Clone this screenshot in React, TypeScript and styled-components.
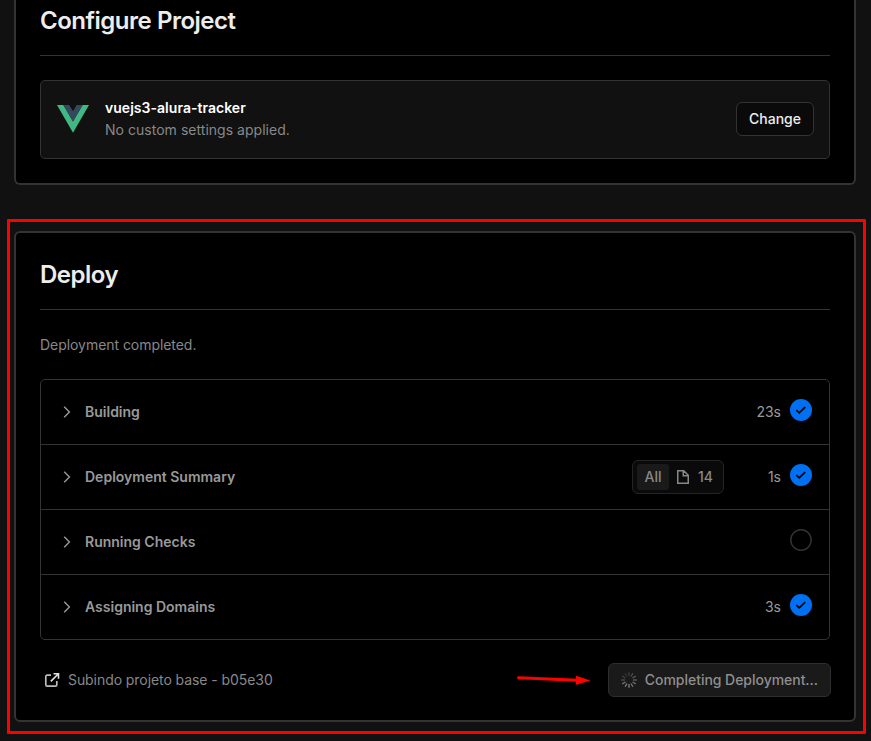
import React from "react";
import styled, { createGlobalStyle } from "styled-components";

const GlobalStyle = createGlobalStyle`
  *, *::before, *::after { box-sizing: border-box; }
  html, body { margin: 0; background: #111; }
  body {
    height: 741px;
    overflow: hidden;
    font-family: Inter, "Liberation Sans", sans-serif;
    font-size: 14px;
    line-height: 20px;
    color: #888;
  }
  svg { display: block; flex: none; }
`;

const Page = styled.main`
  position: relative;
  width: 871px;
  height: 741px;
  padding: 0 15px 0 14px;
  overflow: hidden;
  background: #111;
`;

const Card = styled.section<{ $height: number; $cut?: boolean }>`
  height: ${(p) => p.$height}px;
  padding: ${(p) => (p.$cut ? "0" : "24px")} 24px 0;
  background: #000;
  border: 2px solid #333;
  ${(p) => (p.$cut ? "border-top: 0; border-radius: 0 0 6px 6px; margin-bottom: 46px;" : "border-radius: 6px;")}
`;

const Title = styled.h2<{ $height: number; $top: number }>`
  height: ${(p) => p.$height}px;
  margin: 0;
  padding-top: ${(p) => p.$top}px;
  border-bottom: 1px solid #333;
  color: #ededed;
  font-size: 24px;
  line-height: 32px;
  font-weight: 600;
  letter-spacing: -0.48px;
`;

const ProjectBox = styled.div`
  display: flex;
  align-items: center;
  height: 79px;
  margin-top: 24px;
  padding: 0 15px 2px 16px;
  background: #111;
  border: 1px solid #333;
  border-radius: 5px;
`;

const ProjectText = styled.div`
  flex: 1;
  margin-left: 16px;
  line-height: 22px;
  letter-spacing: 0.03px;
`;

const ProjectName = styled.div`
  color: #fff;
  font-weight: 600;
`;

const Button = styled.button<{ $disabled?: boolean }>`
  display: flex;
  align-items: center;
  height: 34px;
  padding: 0 12px;
  font: 500 14px/20px Inter, "Liberation Sans", sans-serif;
  letter-spacing: ${(p) => (p.$disabled ? "-0.035px" : "0")};
  border-radius: 6px;
  border: 1px solid ${(p) => (p.$disabled ? "#2e2e2e" : "#333")};
  background: ${(p) => (p.$disabled ? "#1a1a1a" : "#0a0a0a")};
  color: ${(p) => (p.$disabled ? "#8f8f8f" : "#ededed")};
  svg { margin-right: 8px; }
`;

const Status = styled.p`
  margin: 25px 0 24px;
  letter-spacing: -0.05px;
`;

const Steps = styled.div`
  border: 1px solid #333;
  border-radius: 5px;
`;

const Step = styled.div`
  display: flex;
  align-items: center;
  height: 65px;
  padding: 0 17px 0 18px;
  & + & { border-top: 1px solid #333; }
  &:first-child { height: 64px; }
`;

const StepName = styled.span`
  flex: 1;
  margin-left: 10px;
  color: #999;
  font-weight: 600;
`;

const Duration = styled.span`
  width: 57px;
  text-align: right;
  color: #999;
`;

const StateIcon = styled.span`
  margin: 0 0 4px 9px;
`;

const Filter = styled.div`
  display: flex;
  align-items: center;
  width: 92px;
  height: 34px;
  padding: 0 4px;
  background: #0a0a0a;
  border: 1px solid #242424;
  border-radius: 6px;
  font-weight: 500;
`;

const FilterAll = styled.span`
  width: 32px;
  height: 26px;
  line-height: 26px;
  margin-right: 6px;
  text-align: center;
  background: #1a1a1a;
  border-radius: 3px;
`;

const FilterCount = styled.span`
  margin-left: 7px;
`;

const Footer = styled.footer`
  display: flex;
  align-items: center;
  justify-content: space-between;
  margin: 23px -1px 0 4px;
`;

const Commit = styled.span`
  display: flex;
  align-items: center;
  gap: 8px;
  letter-spacing: -0.07px;
`;

const Highlight = styled.div`
  position: absolute;
  left: 7px;
  top: 219px;
  width: 859px;
  height: 515px;
  border: 3px solid #f00;
  border-radius: 1px;
`;

const Arrow = styled.svg`
  position: absolute;
  left: 516px;
  top: 672px;
`;

const VueLogo = () => (
  <svg width="32" height="28" viewBox="0 0 32 28">
    <path fill="#41b883" d="M0 0h6.4L16 16.4 25.6 0H32L16 27.7z" />
    <path fill="#35495e" d="M6.4 0h5.9L16 6.3 19.7 0h5.9L16 16.5z" />
  </svg>
);

const Chevron = () => (
  <svg width="16" height="16" viewBox="0 0 16 16" fill="none" stroke="#999" strokeWidth="1.4">
    <path d="M5.2 2.8 10.4 8l-5.2 5.2" />
  </svg>
);

const Done = () => (
  <svg width="22" height="22" viewBox="0 0 22 22" fill="none">
    <circle cx="11" cy="11" r="11" fill="#0070f3" />
    <path d="m6.4 11.1 2.8 2.8 6-5.8" stroke="#000" strokeWidth="1.7" />
  </svg>
);

const Pending = () => (
  <svg width="22" height="22" viewBox="0 0 22 22" fill="none">
    <circle cx="11" cy="11" r="10.2" stroke="#333" strokeWidth="1.4" />
  </svg>
);

const FileIcon = () => (
  <svg width="16" height="16" viewBox="0 0 16 16" fill="none" stroke="#888" strokeWidth="1.5">
    <path d="M2.75 1.75h6l4.5 4.5v8H2.75zM8.25 1.75v5h5" />
  </svg>
);

const ExternalIcon = () => (
  <svg width="16" height="16" viewBox="0 0 16 16" fill="none">
    <path d="M7 3.2H3.2a1.4 1.4 0 0 0-1.4 1.4v8.2a1.4 1.4 0 0 0 1.4 1.4h8.2a1.4 1.4 0 0 0 1.4-1.4V9" stroke="#bbb" strokeWidth="1.7" />
    <path d="M9.5 1.7h5v5M14.2 2 6.8 9.4" stroke="#e2e2e2" strokeWidth="1.6" />
  </svg>
);

const Spinner = () => (
  <svg width="16" height="16" viewBox="0 0 16 16" stroke="#a0a0a0" strokeWidth="1.25">
    {Array.from({ length: 12 }, (_, i) => (
      <path
        key={i}
        d="M8 .2v3.8"
        transform={`rotate(${i * 30} 8 8)`}
        opacity={[0.28, 0.4, 0.47, 0.54, 0.62, 0.7, 0.8, 0.8, 0.7, 0.42, 0.28, 0.2][i]}
      />
    ))}
  </svg>
);

const steps = [
  { name: "Building", time: "23s", done: true },
  { name: "Deployment Summary", time: "1s", done: true, files: 14 },
  { name: "Running Checks", time: "", done: false },
  { name: "Assigning Domains", time: "3s", done: true },
];

export default function App() {
  return (
    <>
      <GlobalStyle />
      <Page>
        <Card $height={185} $cut>
          <Title $height={56} $top={5}>Configure Project</Title>
          <ProjectBox>
            <VueLogo />
            <ProjectText>
              <ProjectName>vuejs3-alura-tracker</ProjectName>
              <div>No custom settings applied.</div>
            </ProjectText>
            <Button>Change</Button>
          </ProjectBox>
        </Card>
        <Card $height={491}>
          <Title $height={53} $top={2}>Deploy</Title>
          <Status>Deployment completed.</Status>
          <Steps>
            {steps.map((s) => (
              <Step key={s.name}>
                <Chevron />
                <StepName>{s.name}</StepName>
                {s.files && (
                  <Filter>
                    <FilterAll>All</FilterAll>
                    <FileIcon />
                    <FilterCount>{s.files}</FilterCount>
                  </Filter>
                )}
                <Duration>{s.time}</Duration>
                <StateIcon>{s.done ? <Done /> : <Pending />}</StateIcon>
              </Step>
            ))}
          </Steps>
          <Footer>
            <Commit>
              <ExternalIcon />
              Subindo projeto base - b05e30
            </Commit>
            <Button $disabled>
              <Spinner />
              Completing Deployment...
            </Button>
          </Footer>
        </Card>
        <Highlight />
        <Arrow width="76" height="16" viewBox="0 0 76 16">
          <path d="M2.6 5.8 62 8.2" stroke="#f00" strokeWidth="3" strokeLinecap="round" />
          <path d="M60 3.8 74.5 8.5 60 12.7z" fill="#f00" />
        </Arrow>
      </Page>
    </>
  );
}
